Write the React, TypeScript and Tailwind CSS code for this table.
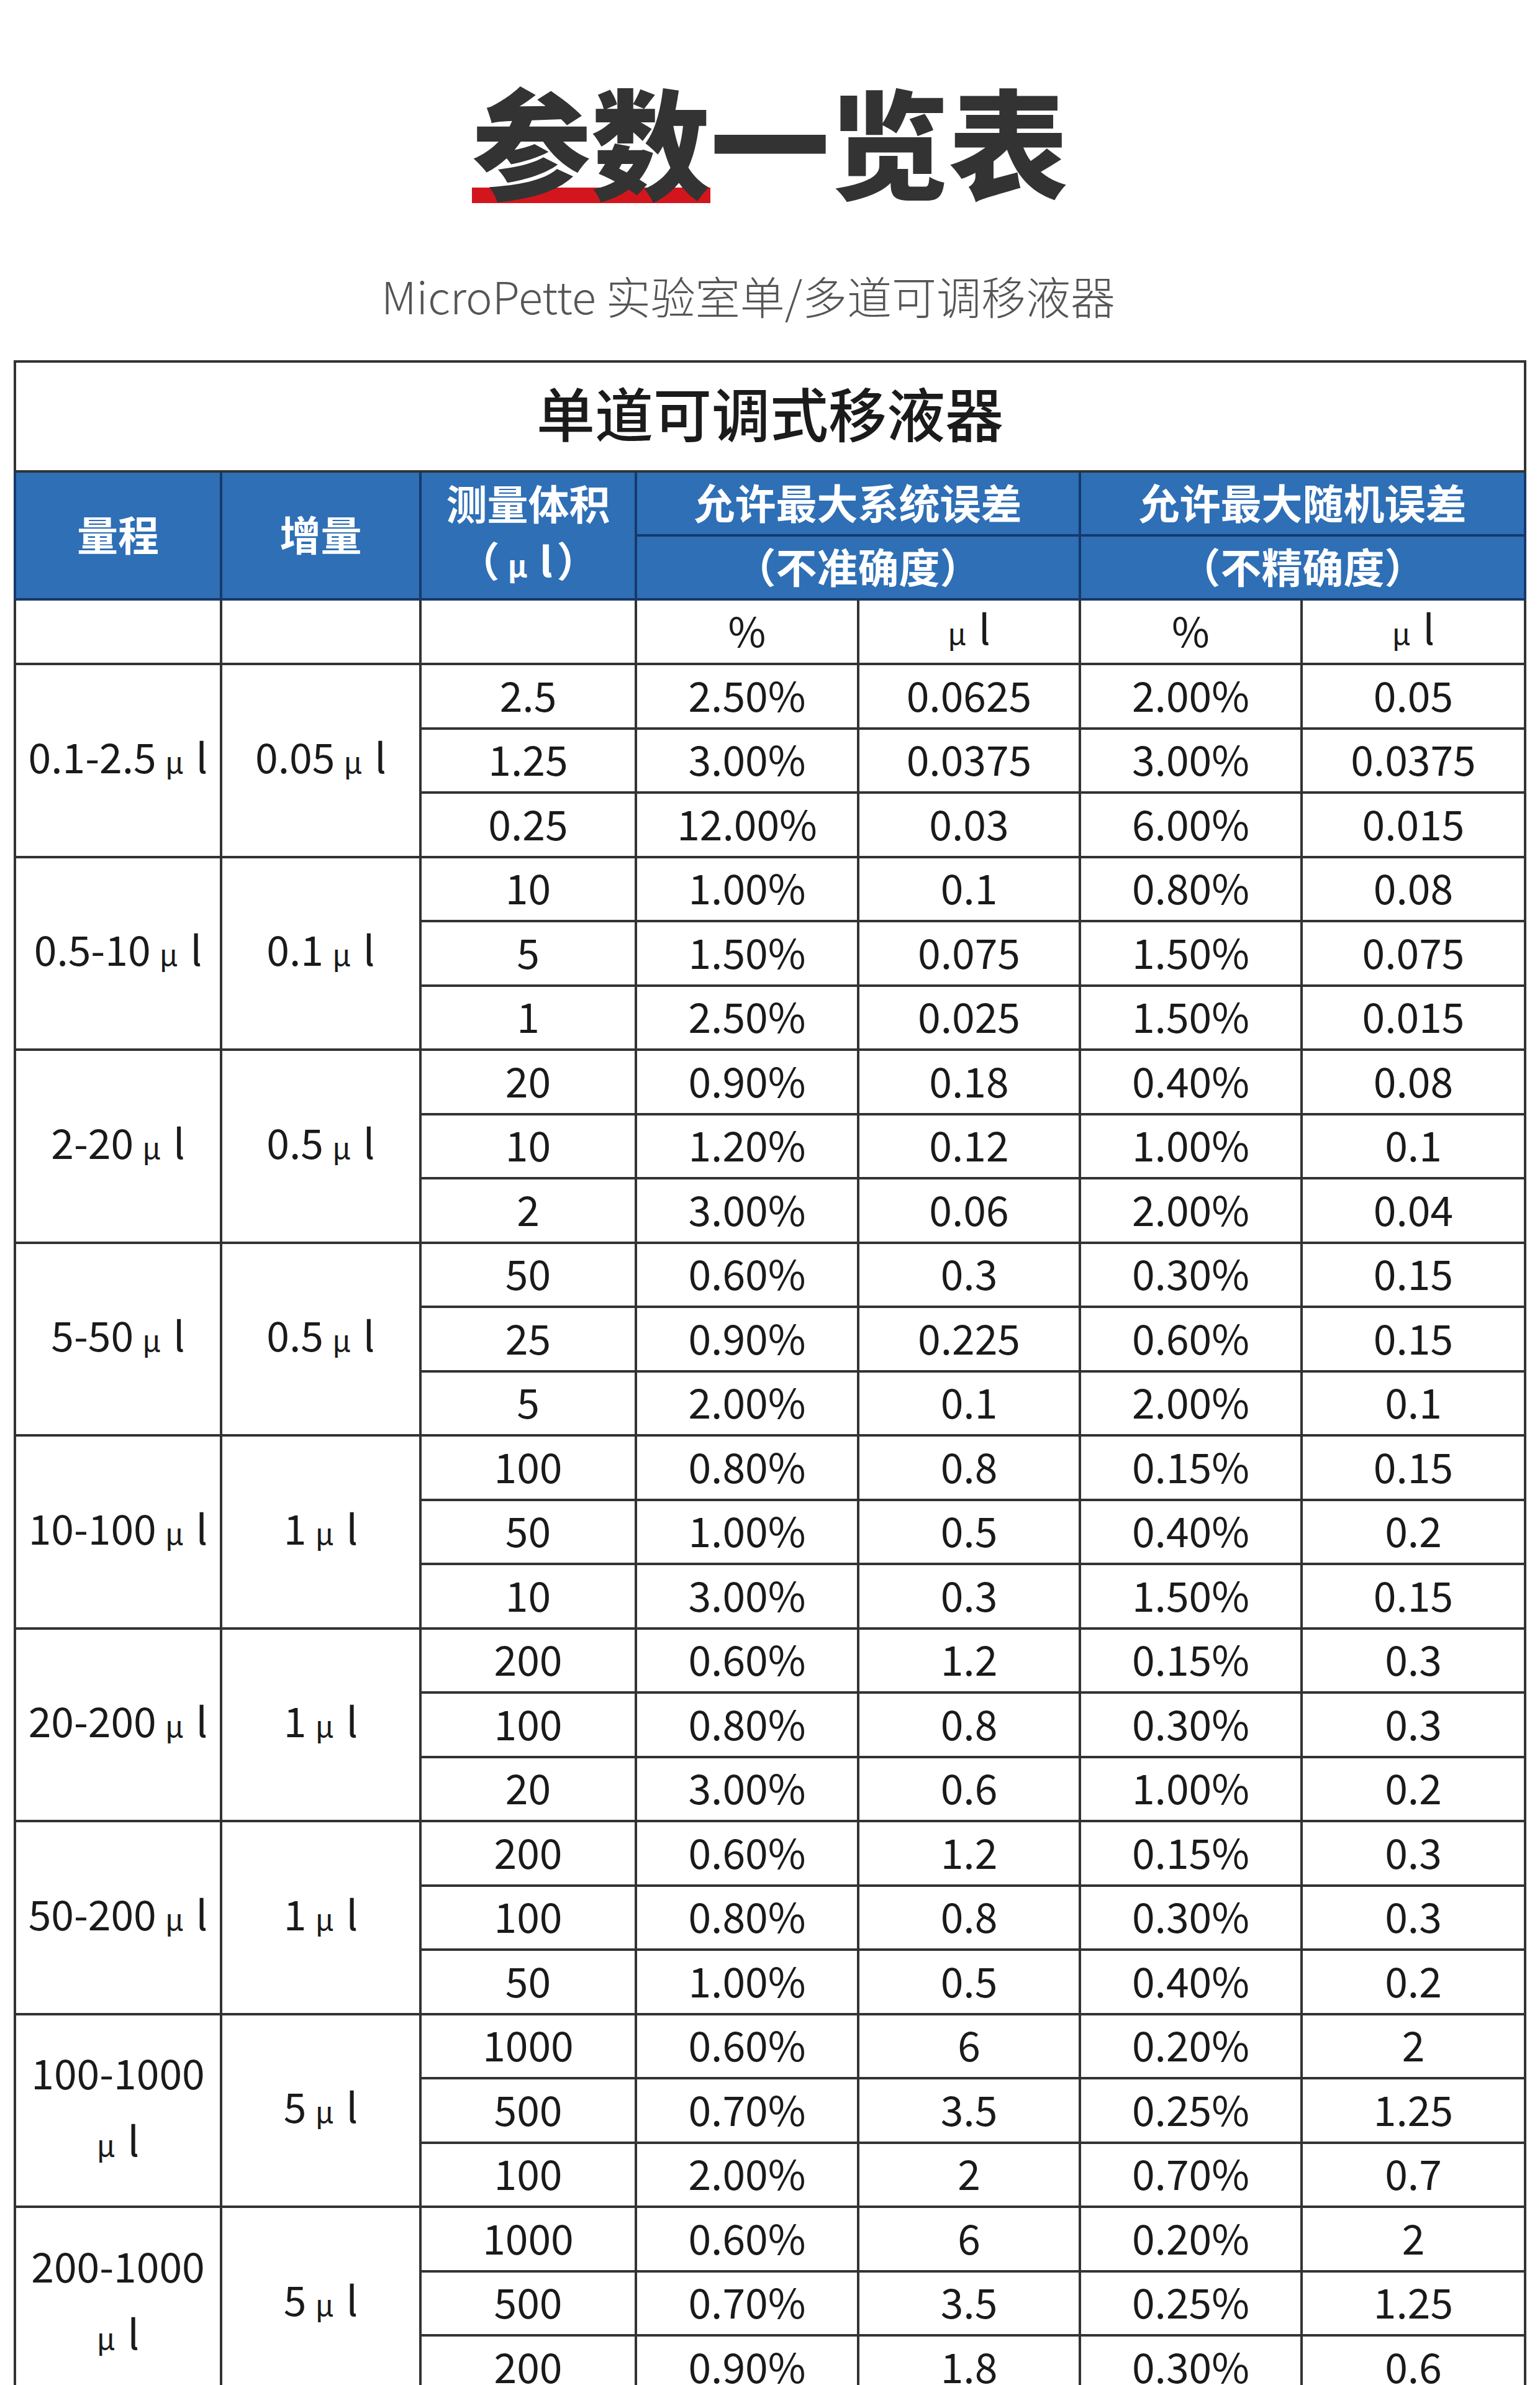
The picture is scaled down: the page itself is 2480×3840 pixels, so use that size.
import React from "react";

type Group = {
  range: string;
  inc: string;
  wrap?: boolean;
  rows: string[][];
};

const groups: Group[] = [
  {
    range: "0.1-2.5",
    inc: "0.05",
    rows: [
      ["2.5", "2.50%", "0.0625", "2.00%", "0.05"],
      ["1.25", "3.00%", "0.0375", "3.00%", "0.0375"],
      ["0.25", "12.00%", "0.03", "6.00%", "0.015"],
    ],
  },
  {
    range: "0.5-10",
    inc: "0.1",
    rows: [
      ["10", "1.00%", "0.1", "0.80%", "0.08"],
      ["5", "1.50%", "0.075", "1.50%", "0.075"],
      ["1", "2.50%", "0.025", "1.50%", "0.015"],
    ],
  },
  {
    range: "2-20",
    inc: "0.5",
    rows: [
      ["20", "0.90%", "0.18", "0.40%", "0.08"],
      ["10", "1.20%", "0.12", "1.00%", "0.1"],
      ["2", "3.00%", "0.06", "2.00%", "0.04"],
    ],
  },
  {
    range: "5-50",
    inc: "0.5",
    rows: [
      ["50", "0.60%", "0.3", "0.30%", "0.15"],
      ["25", "0.90%", "0.225", "0.60%", "0.15"],
      ["5", "2.00%", "0.1", "2.00%", "0.1"],
    ],
  },
  {
    range: "10-100",
    inc: "1",
    rows: [
      ["100", "0.80%", "0.8", "0.15%", "0.15"],
      ["50", "1.00%", "0.5", "0.40%", "0.2"],
      ["10", "3.00%", "0.3", "1.50%", "0.15"],
    ],
  },
  {
    range: "20-200",
    inc: "1",
    rows: [
      ["200", "0.60%", "1.2", "0.15%", "0.3"],
      ["100", "0.80%", "0.8", "0.30%", "0.3"],
      ["20", "3.00%", "0.6", "1.00%", "0.2"],
    ],
  },
  {
    range: "50-200",
    inc: "1",
    rows: [
      ["200", "0.60%", "1.2", "0.15%", "0.3"],
      ["100", "0.80%", "0.8", "0.30%", "0.3"],
      ["50", "1.00%", "0.5", "0.40%", "0.2"],
    ],
  },
  {
    range: "100-1000",
    inc: "5",
    wrap: true,
    rows: [
      ["1000", "0.60%", "6", "0.20%", "2"],
      ["500", "0.70%", "3.5", "0.25%", "1.25"],
      ["100", "2.00%", "2", "0.70%", "0.7"],
    ],
  },
  {
    range: "200-1000",
    inc: "5",
    wrap: true,
    rows: [
      ["1000", "0.60%", "6", "0.20%", "2"],
      ["500", "0.70%", "3.5", "0.25%", "1.25"],
      ["200", "0.90%", "1.8", "0.30%", "0.6"],
    ],
  },
];

// μl unit, drawn smaller like in the source sheet
function Ul({ first = true }: { first?: boolean }) {
  return (
    <>
      <span className={first ? "ml-[0.3em] text-[0.72em]" : "text-[0.72em]"}>μ</span>
      <span className="ml-[0.3em]">l</span>
    </>
  );
}

const line = "border-[4px] border-[#333] text-center p-0";
const cell = `${line} pb-[8px] leading-[80px]`;
const head =
  "border-[4px] border-[#17396a] bg-[#2e6fb6] text-center p-0 pb-[8px] text-white font-bold text-[66px] leading-[80px]";

export default function App() {
  return (
    <div className="w-[2480px] h-[3840px] overflow-hidden bg-white font-['Noto_Sans_CJK_SC','Noto_Sans',sans-serif]">
      <div className="pt-[127px] flex flex-col items-center">
        <h1 className="text-[192px] leading-[192px] font-black text-[#333] isolate">
          <span className="relative inline-block">
            <span className="absolute left-0 right-0 bottom-[-8px] h-[25px] bg-[#d3161d] -z-10"></span>
            参数
          </span>
          一览表
        </h1>
        <p className="mt-[120px] mr-[70px] text-[72px] leading-[72px] font-light text-[#555]">
          MicroPette 实验室单/多道可调移液器
        </p>
      </div>

      <table className="mt-[69px] mx-auto w-[2432px] table-fixed border-collapse text-[#1a1a1a] text-[66px]">
        <colgroup>
          <col className="w-[332px]" />
          <col className="w-[321px]" />
          <col className="w-[347px]" />
          <col className="w-[358px]" />
          <col className="w-[357px]" />
          <col className="w-[357px]" />
          <col className="w-[360px]" />
        </colgroup>
        <thead>
          <tr className="h-[177px]">
            <td colSpan={7} className={`${line} pb-[14px] text-[94px] font-medium text-[#1b1b1b]`}>
              单道可调式移液器
            </td>
          </tr>
          <tr className="h-[103px]">
            <th rowSpan={2} className={head}>量程</th>
            <th rowSpan={2} className={head}>增量</th>
            <th rowSpan={2} className={`${head} !leading-[92px]`}>
              测量体积
              <br />
              （<span className="ml-[0.2em]"></span>
              <Ul first={false} />
              <span className="mr-[0.1em]"></span>）
            </th>
            <th colSpan={2} className={head}>允许最大系统误差</th>
            <th colSpan={2} className={head}>允许最大随机误差</th>
          </tr>
          <tr className="h-[103px]">
            <th colSpan={2} className={head}>（不准确度）</th>
            <th colSpan={2} className={head}>（不精确度）</th>
          </tr>
          <tr className="h-[104px]">
            <td className={cell}></td>
            <td className={cell}></td>
            <td className={cell}></td>
            <td className={cell}>%</td>
            <td className={cell}>
              <Ul first={false} />
            </td>
            <td className={cell}>%</td>
            <td className={cell}>
              <Ul first={false} />
            </td>
          </tr>
        </thead>
        <tbody>
          {groups.map((g) =>
            g.rows.map((r, i) => (
              <tr key={g.range + i} className="h-[103.5px]">
                {i === 0 && (
                  <>
                    <td rowSpan={3} className={`${cell} ${g.wrap ? "!leading-[108px]" : ""}`}>
                      {g.range}
                      {g.wrap ? (
                        <>
                          <br />
                          <Ul first={false} />
                        </>
                      ) : (
                        <Ul />
                      )}
                    </td>
                    <td rowSpan={3} className={cell}>
                      {g.inc}
                      <Ul />
                    </td>
                  </>
                )}
                {r.map((v, j) => (
                  <td key={j} className={cell}>
                    {v}
                  </td>
                ))}
              </tr>
            ))
          )}
        </tbody>
      </table>
    </div>
  );
}
